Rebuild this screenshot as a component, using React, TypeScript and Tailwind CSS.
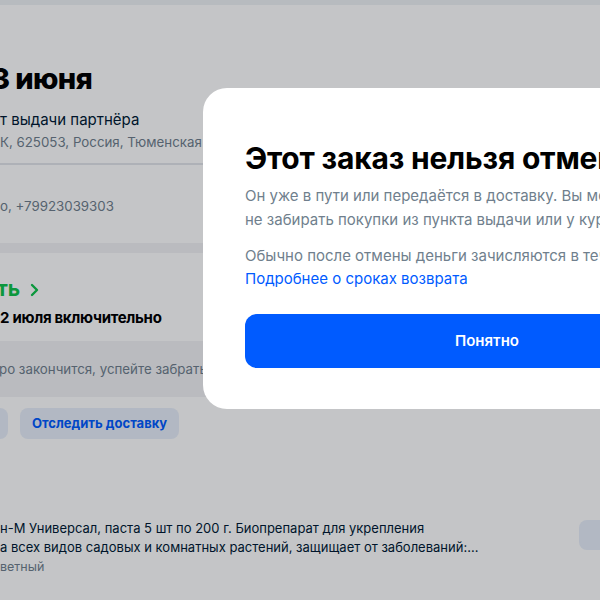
import React from 'react';

const Chevron = () => (
  <svg width="12" height="14" viewBox="0 0 12 14" fill="none" className="ml-[9px] mt-[2px]">
    <path d="M3 2l5 5-5 5" stroke="currentColor" strokeWidth="2.4" strokeLinecap="round" strokeLinejoin="round" />
  </svg>
);

const App = () => {
  return (
    <div className="relative h-[600px] w-[600px] overflow-hidden bg-white font-['Inter',sans-serif] text-[#001a34]">
      {/* page under the dialog */}
      <div className="h-[5px] bg-[#eff2f5]" />
      <main className="flex flex-col">
        <h1 className="mt-[56px] -ml-[9px] whitespace-nowrap text-[29px] font-extrabold leading-[36px] tracking-[-0.6px] text-black">
          3 июня
        </h1>
        <p className="mt-[11px] whitespace-nowrap text-[15px] leading-[24px]">т выдачи партнёра</p>
        <p className="whitespace-nowrap text-[13.3px] leading-[20px] text-[#707f8d]">
          К, 625053, Россия, Тюменская область, Тюмень
        </p>
        <div className="mt-[11px] h-[2px] bg-[#e3e6ea]" />
        <p className="mt-[31px] whitespace-nowrap text-[13.3px] leading-[20px] text-[#707f8d]">
          о, +79923039303
        </p>
        <div className="mt-[27px] h-[10px] bg-[#f2f3f5]" />

        <div className="mt-[23px] flex items-center text-[21px] font-bold leading-[26px] text-[#10c44c]">
          <span className="-ml-[3px]">ть</span>
          <Chevron />
        </div>
        <p className="mt-[5px] whitespace-nowrap text-[15px] font-bold leading-[22px] tracking-[-0.3px] text-black">
          2 июля включительно
        </p>

        <div className="mt-[12px] flex h-[56px] items-center bg-[#f2f3f5]">
          <p className="-ml-[1px] whitespace-nowrap text-[13.3px] leading-[20px] text-[#707f8d]">
            ро закончится, успейте забрать заказ
          </p>
        </div>

        <div className="mt-[11px] flex gap-[12px]">
          <div className="h-[31px] w-[8px] rounded-r-[8px] bg-[#e8effa]" />
          <button className="h-[31px] rounded-[8px] bg-[#e8effa] px-[12px] text-[13px] font-bold text-[#005bff]">
            Отследить доставку
          </button>
        </div>

        <div className="mt-[79px] flex items-start justify-between">
          <div className="flex flex-col whitespace-nowrap">
            <p className="text-[13px] leading-[20px]">
              н-М Универсал, паста 5 шт по 200 г. Биопрепарат для укрепления
            </p>
            <p className="text-[13px] leading-[19px]">
              а всех видов садовых и комнатных растений, защищает от заболеваний:...
            </p>
            <p className="text-[12.5px] leading-[19px] text-[#707f8d]">ветный</p>
          </div>
          <div className="mr-[-12px] mt-[2px] h-[30px] w-[33px] rounded-[8px] bg-[#e8effa]" />
        </div>
      </main>

      {/* dim layer */}
      <div className="absolute inset-0 bg-[rgba(0,3,12,0.23)]" />

      {/* dialog */}
      <div className="absolute left-[203px] top-[88px] w-[568px] rounded-[24px] bg-white px-[42px] pb-[41px] pt-[52px]">
        <h2 className="whitespace-nowrap text-[30px] font-bold leading-[36px] tracking-[-0.2px] text-black">
          Этот заказ нельзя отменить
        </h2>
        <p className="mt-[8px] whitespace-nowrap text-[15px] leading-[24px] text-[#707f8d]">
          Он уже в пути или передаётся в доставку. Вы можете
          <br />
          не забирать покупки из пункта выдачи или у курьера
        </p>
        <p className="mt-[12px] whitespace-nowrap text-[15px] leading-[23px] text-[#707f8d]">
          Обычно после отмены деньги зачисляются в течение
        </p>
        <a className="block text-[15px] leading-[24px] text-[#005bff]">Подробнее о сроках возврата</a>
        <button className="mt-[23px] h-[54px] w-full rounded-[12px] bg-[#005bff] text-[15px] font-semibold text-white">
          Понятно
        </button>
      </div>
    </div>
  );
};

export default App;
